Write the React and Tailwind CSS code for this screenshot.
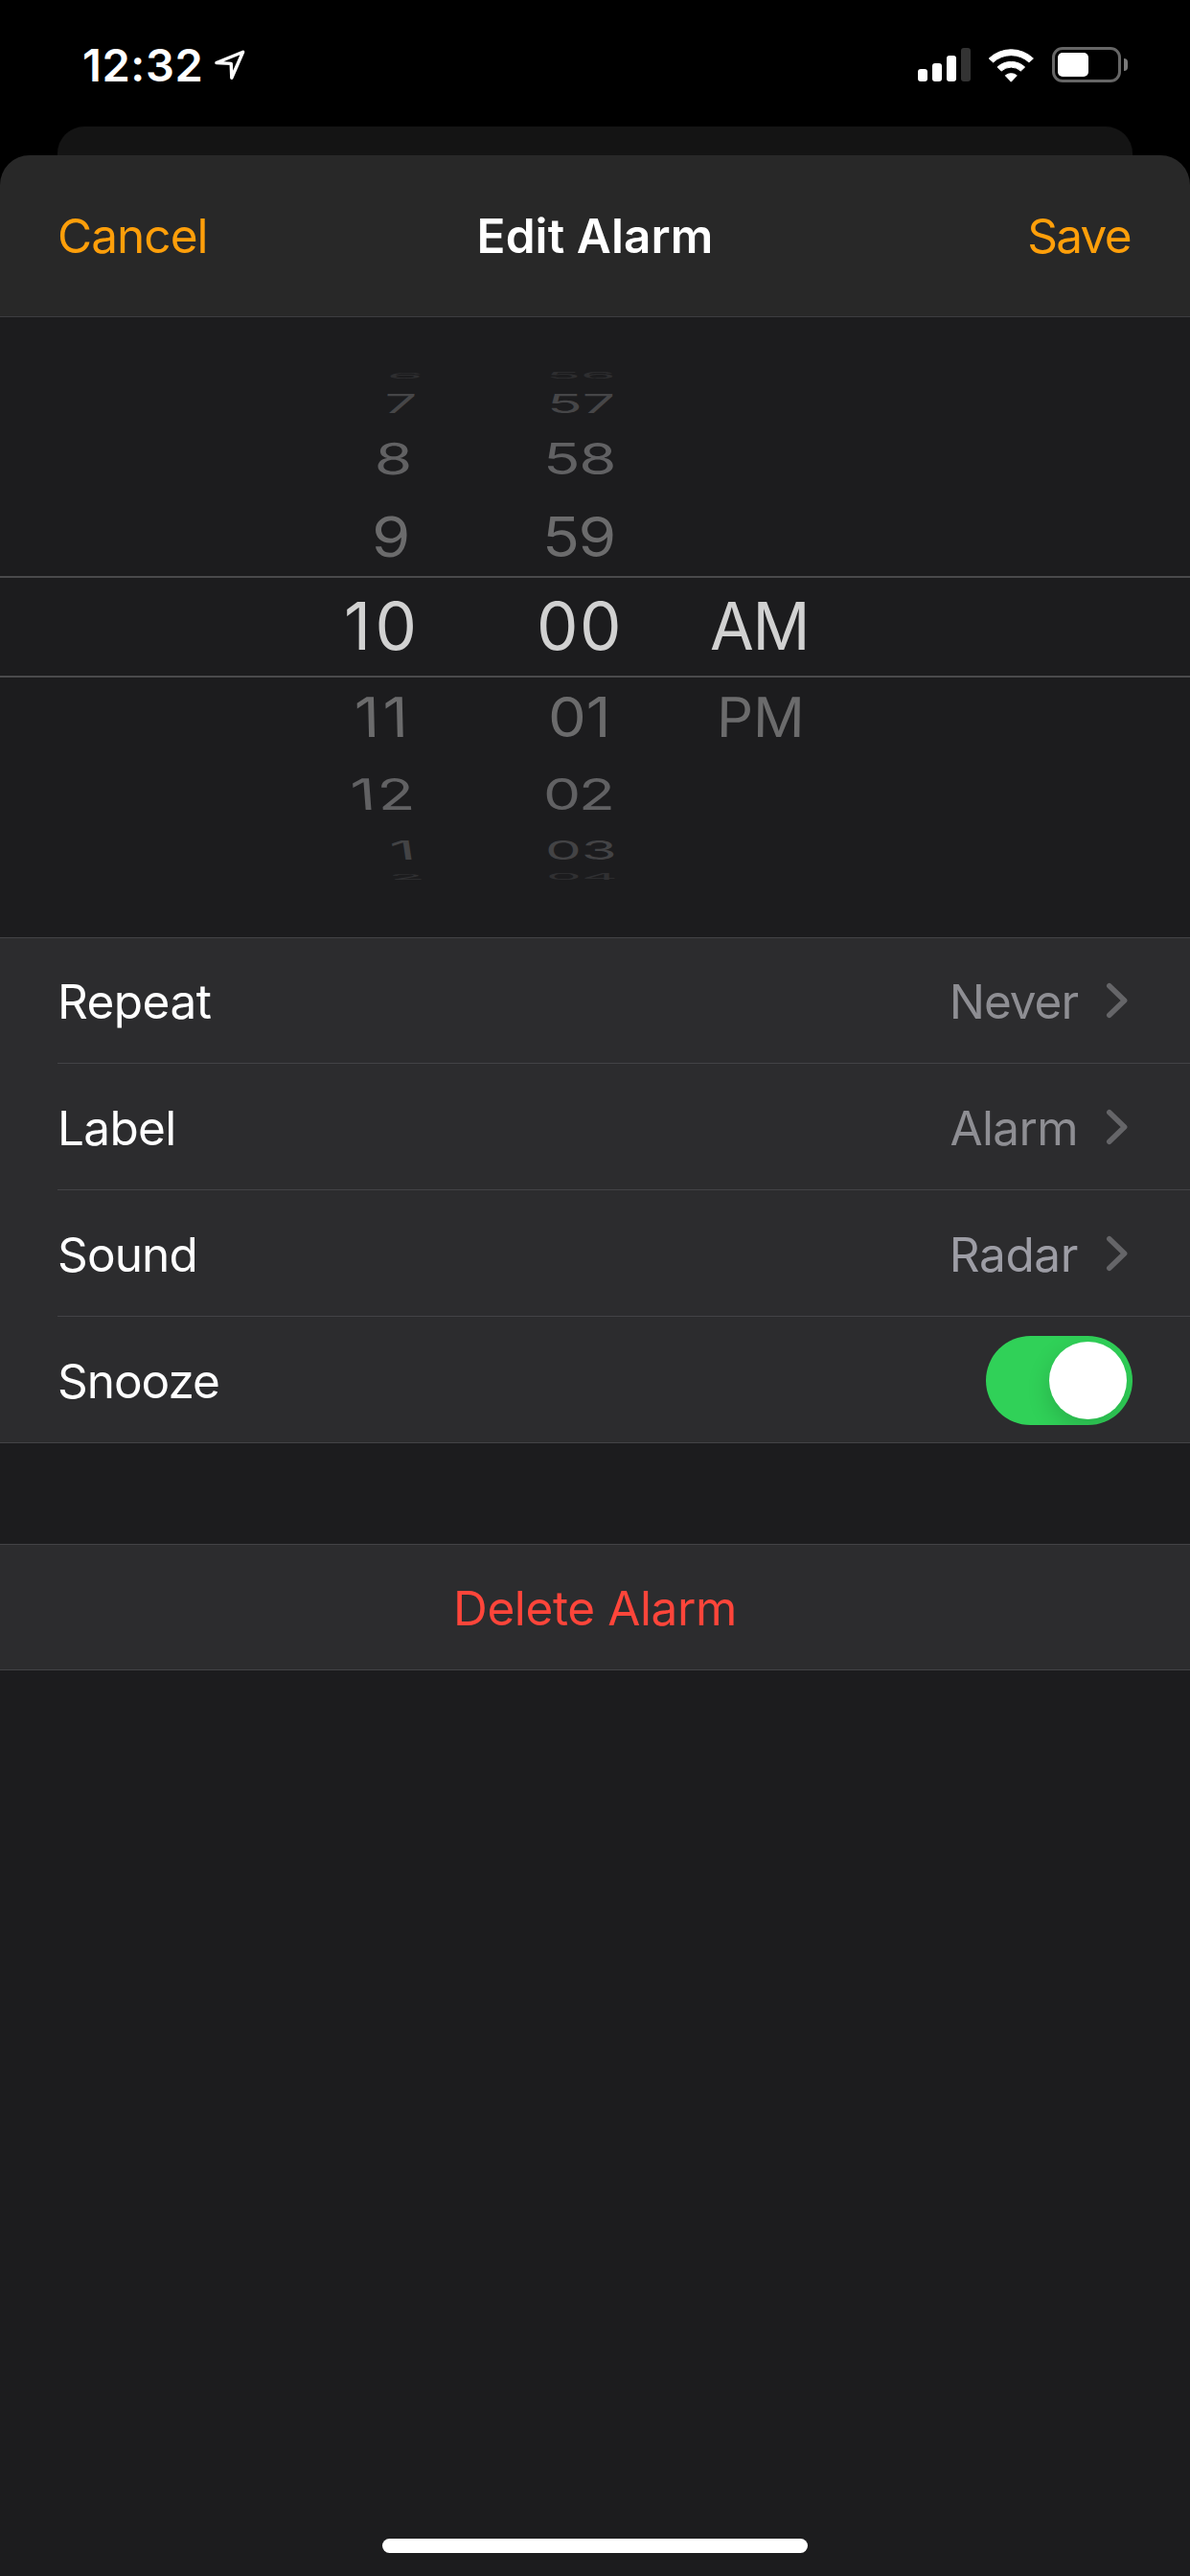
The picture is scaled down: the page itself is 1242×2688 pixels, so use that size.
import React from "react";

const WHEEL = [
  {
    row: "h-[24px] text-[#2e2e30]",
    hour: ["6", "ml-[404px] [transform:matrix(.886,0,-.06,.12,0,0)]"],
    minute: ["56", "ml-[40px] [transform:matrix(.856,0,0,.12,0,0)]"],
  },
  {
    row: "h-[34px] text-[#464648]",
    hour: ["7", "ml-[401px] [transform:matrix(.86,0,-.03,.4,0,0)]"],
    minute: ["57", "ml-[41px] [transform:matrix(.878,0,0,.4,0,0)]"],
  },
  {
    row: "h-[81px] text-[#616163]",
    hour: ["8", "ml-[391px] [transform:matrix(.93,0,-.03,.655,0,0)]"],
    minute: ["58", "ml-[37px] tracking-[-1.4px] [transform:matrix(.92,0,0,.655,0,0)]"],
  },
  {
    row: "h-[82px] text-[#6b6b6c]",
    hour: ["9", "ml-[387.5px] [transform:matrix(.943,0,-.02,.834,0,0)]"],
    minute: ["59", "ml-[36px] tracking-[-1.5px] [transform:matrix(.93,0,0,.834,0,0)]"],
  },
  {
    row: "h-[106px] border-y-2 border-[#4a4a4c] pb-[2px] text-[#d1d1d1]",
    hour: ["10", "ml-[359px] tracking-[4.5px]"],
    minute: ["00", "ml-[30px] tracking-[1.5px]"],
    period: ["AM", "ml-[41px] tracking-[-1.5px] [transform:scaleX(.963)]"],
  },
  {
    row: "h-[82px] text-[#6b6b6c]",
    hour: ["11", "ml-[370px] tracking-[4px] [transform:matrix(.93,0,.02,.834,0,0)]"],
    minute: ["01", "ml-[42px] [transform:matrix(.915,0,0,.834,0,0)]"],
    period: ["PM", "ml-[48px] [transform:matrix(.863,0,-.01,.834,0,0)]"],
  },
  {
    row: "h-[79px] text-[#616163]",
    hour: ["12", "ml-[366px] tracking-[2px] [transform:matrix(.92,0,.05,.65,0,0)]"],
    minute: ["02", "ml-[37px] tracking-[-2.5px] [transform:matrix(.9,0,0,.65,0,0)]"],
  },
  {
    row: "h-[37px] text-[#434345]",
    hour: ["1", "ml-[407px] [transform:matrix(.95,0,.06,.4,0,0)]"],
    minute: ["03", "ml-[38.5px] [transform:matrix(.87,0,0,.4,0,0)]"],
  },
  {
    row: "h-[20px] text-[#303032]",
    hour: ["2", "ml-[406px] [transform:matrix(.87,0,.06,.12,0,0)]"],
    minute: ["04", "ml-[40px] [transform:matrix(.85,0,0,.12,0,0)]"],
  },
];

function StatusBar() {
  return (
    <div className="flex h-[132px] items-start justify-between pl-[86px] pr-[65px]">
      <div className="flex h-[136px] items-center text-[47px] font-semibold tracking-[0.6px] text-white">
        12:32
        <svg className="ml-[10px] h-[36px] w-[36px]" viewBox="222 50 36 36" fill="none">
          <path
            d="M225.9 65.5 L253.6 54.2 L241.8 81.3 L241.2 66.4 Z"
            stroke="#fff"
            strokeWidth="3.4"
            strokeLinejoin="round"
          />
        </svg>
      </div>
      <div className="flex h-[135px] items-center">
        <div className="flex h-[35px] items-end gap-[5px]">
          <div className="h-[13px] w-[10px] rounded-[3px] bg-white" />
          <div className="h-[19px] w-[10px] rounded-[3px] bg-white" />
          <div className="h-[27px] w-[10px] rounded-[3px] bg-white" />
          <div className="h-[35px] w-[10px] rounded-[3px] bg-[#333333]" />
        </div>
        <svg className="ml-[17px] h-[38px] w-[50px]" viewBox="1030 48 50 38" fill="#fff" stroke="#fff" strokeWidth="1" strokeLinejoin="round">
          <path d="M1032.2 60 A33.5 33.5 0 0 1 1078.4 60 L1074 64 A27.5 27.5 0 0 0 1036.6 64 Z" />
          <path d="M1041 69 A21 21 0 0 1 1069.6 69 L1065.4 73 A15 15 0 0 0 1045.2 73 Z" />
          <path d="M1049.3 77.8 A9.5 9.5 0 0 1 1061.3 77.8 L1055.3 84.2 Z" />
        </svg>
        <div className="ml-[18px] flex h-[37px] w-[72px] items-center rounded-[11px] border-[3px] border-[#666666] pl-[3px]">
          <div className="h-[25px] w-[32px] rounded-[5px] bg-white" />
        </div>
        <div className="ml-[3px] h-[13px] w-[4px] rounded-r-full bg-[#7a7a7a]" />
      </div>
    </div>
  );
}

function Header() {
  return (
    <header className="grid h-[169px] grid-cols-3 items-center rounded-t-[31px] border-b border-[#3d3d40] bg-[#282828] px-[60px]">
      <span className="tracking-[-0.96px] text-[#ff9f0a]">Cancel</span>
      <span className="text-center font-semibold tracking-[0.1px] text-white">Edit Alarm</span>
      <span className="pr-[2px] text-right tracking-[-1.67px] text-[#ff9f0a]">Save</span>
    </header>
  );
}

function Digits({ item }) {
  if (!item) return <span />;
  return <span className={"block w-max origin-left " + item[1]}>{item[0]}</span>;
}

function TimePicker() {
  return (
    <div className="h-[647px] pt-[49px] text-[69px] leading-[84px]">
      {WHEEL.map((w) => (
        <div key={w.minute[0]} className={"grid grid-cols-[530px_170px_1fr] content-center items-center " + w.row}>
          <Digits item={w.hour} />
          <Digits item={w.minute} />
          <Digits item={w.period} />
        </div>
      ))}
    </div>
  );
}

function Chevron() {
  return (
    <svg className="ml-[27px] h-[40px] w-[30px]" viewBox="0 0 30 40" fill="none">
      <path d="M5.8 3.8 L21.6 19 L5.8 34.2" stroke="#656568" strokeWidth="5.6" strokeLinecap="round" strokeLinejoin="round" />
    </svg>
  );
}

function Row({ label, tracking, last, children }) {
  return (
    <div className="flex h-[132px] pl-[60px] first:h-[131px] last:h-[131px]">
      <div className={"flex grow items-center pr-[60px] pt-[2px] " + (last ? "" : "border-b border-[#434346]")}>
        <span className={"grow text-white " + tracking}>{label}</span>
        {children}
      </div>
    </div>
  );
}

export default function App() {
  return (
    <div className="flex h-[2688px] w-[1242px] flex-col overflow-hidden bg-black font-['Inter','Liberation_Sans',sans-serif] text-[49.5px] leading-[60px]">
      <StatusBar />
      <div className="mx-[60px] h-[30px] shrink-0 rounded-t-[28px] bg-[#141414]" />
      <Header />
      <main className="flex grow flex-col bg-[#1c1c1e]">
        <TimePicker />
        <section className="border-y border-[#434346] bg-[#2c2c2e]">
          <Row label="Repeat" tracking="tracking-[-0.56px]">
            <span className="tracking-[-1.05px] text-[#8e8e93]">Never</span>
            <Chevron />
          </Row>
          <Row label="Label" tracking="tracking-[-0.67px]">
            <span className="tracking-[-0.62px] text-[#8e8e93]">Alarm</span>
            <Chevron />
          </Row>
          <Row label="Sound" tracking="tracking-[-0.87px]">
            <span className="tracking-[-0.4px] text-[#9d9da5]">Radar</span>
            <Chevron />
          </Row>
          <Row label="Snooze" tracking="tracking-[-1.06px]" last>
            <div className="flex h-[93px] w-[153px] items-center justify-end overflow-hidden rounded-full bg-[#30d158] pr-[6px]">
              <div className="size-[81px] rounded-full bg-white shadow-[0_9px_24px_rgba(0,0,0,0.16)]" />
            </div>
          </Row>
        </section>
        <section className="mt-[105px] flex h-[132px] items-center justify-center border-y border-[#434346] bg-[#2c2c2e] pt-[2px]">
          <span className="tracking-[-0.4px] text-[#ff453a]">Delete Alarm</span>
        </section>
        <div className="mx-auto mb-[24px] mt-auto h-[15px] w-[444px] rounded-full bg-white" />
      </main>
    </div>
  );
}
